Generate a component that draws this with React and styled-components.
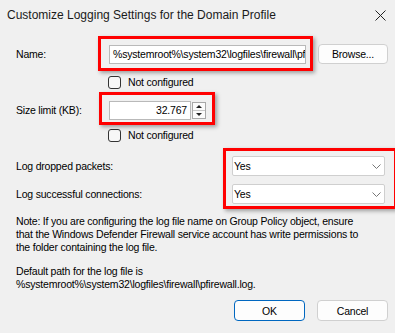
import React from "react";
import styled, { createGlobalStyle } from "styled-components";

const GlobalStyle = createGlobalStyle`
  html, body {
    margin: 0;
    padding: 0;
    background: #f0f0f0;
  }
  body {
    font-family: "Liberation Sans", Arial, sans-serif;
    font-size: 10.5px;
    letter-spacing: -0.2px;
    color: #000;
  }
`;

const Window = styled.div`
  position: relative;
  width: 395px;
  height: 333px;
  overflow: hidden;
  background: #f0f0f0;
`;

const TitleBar = styled.div`
  height: 30px;
  display: flex;
  align-items: center;
  justify-content: space-between;
  padding: 0 7px 0 7px;
  font-size: 12px;
  letter-spacing: 0;
  color: #1a1a1a;
`;

const CloseButton = styled.div`
  width: 14px;
  height: 14px;
  display: flex;
  align-items: center;
  justify-content: center;
  margin-right: 1px;
`;

const Body = styled.div`
  padding: 0 7px 0 16px;
`;

const Row = styled.div`
  display: flex;
  align-items: center;
  margin-top: ${p => p.top || 0}px;
  padding-left: ${p => p.indent || 0}px;
`;

const Label = styled.label`
  width: ${p => p.width || 93}px;
  flex: none;
  line-height: 13px;
`;

const HighlightWrap = styled.div`
  position: relative;
  display: flex;
  flex-direction: ${p => (p.column ? "column" : "row")};
  gap: 8px;
`;

const Highlight = styled.div`
  position: absolute;
  top: ${p => p.t}px;
  left: ${p => p.l}px;
  right: ${p => p.r}px;
  bottom: ${p => p.b}px;
  border: 3px solid #ff0000;
  box-shadow: 2px 2px 4px rgba(0, 0, 0, 0.35);
  pointer-events: none;
`;

const TextInput = styled.div`
  box-sizing: border-box;
  width: ${p => p.width}px;
  height: 19px;
  background: #fff;
  border: 1px solid #b9b9b9;
  padding: 0 3px;
  line-height: 17px;
  white-space: nowrap;
  overflow: hidden;
  text-align: ${p => (p.right ? "right" : "left")};
`;

const Button = styled.button`
  box-sizing: border-box;
  width: ${p => p.width || 71}px;
  height: ${p => p.height || 21}px;
  margin-left: ${p => p.gap || 0}px;
  background: #fdfdfd;
  border: 1px solid ${p => (p.primary ? "#0067c0" : "#d0d0d0")};
  border-radius: 4px;
  font-family: inherit;
  font-size: 10.5px;
  letter-spacing: -0.2px;
  color: #000;
  padding: 0;
`;

const CheckRow = styled.label`
  display: flex;
  align-items: center;
  gap: 7px;
  line-height: 13px;
`;

const Box = styled.span`
  box-sizing: border-box;
  width: 13px;
  height: 13px;
  border: 1px solid #333;
  border-radius: 3px;
  background: #f7f7f7;
`;

const SpinField = styled.div`
  display: flex;
  align-items: center;
`;

const Spinner = styled.div`
  box-sizing: border-box;
  width: 14px;
  height: 17px;
  margin-left: 1px;
  border: 1px solid #a8a8a8;
  display: flex;
  flex-direction: column;
  background: #fbfbfb;
`;

const SpinHalf = styled.div`
  flex: 1;
  display: flex;
  align-items: center;
  justify-content: center;
  border-top: ${p => (p.down ? "1px solid #c8c8c8" : "none")};
`;

const Arrow = styled.span`
  width: 0;
  height: 0;
  border-left: 3px solid transparent;
  border-right: 3px solid transparent;
  ${p =>
    p.down
      ? "border-top: 3px solid #222;"
      : "border-bottom: 3px solid #222;"}
`;

const Labels = styled.div`
  display: flex;
  flex-direction: column;
  gap: 8px;
`;

const LabelCell = styled.div`
  width: 216px;
  height: 20px;
  display: flex;
  align-items: center;
`;

const Select = styled.div`
  box-sizing: border-box;
  width: 153px;
  height: 20px;
  background: #fff;
  border: 1px solid #cfcfcf;
  border-radius: 2px;
  display: flex;
  align-items: center;
  justify-content: space-between;
  padding: 0 3px 0 1px;
`;

const Note = styled.p`
  margin: ${p => p.top || 0}px 0 0 0;
  line-height: 13px;
  white-space: nowrap;
`;

const Footer = styled.div`
  display: flex;
  justify-content: flex-end;
  margin-top: 9px;
`;

const Chevron = () => (
  <svg width="9" height="5" viewBox="0 0 9 5">
    <path d="M0.5 0.5 L4.5 4.5 L8.5 0.5" fill="none" stroke="#777" strokeWidth="1" />
  </svg>
);

const Checkbox = ({ children }) => (
  <CheckRow>
    <Box />
    {children}
  </CheckRow>
);

export default function App() {
  return (
    <Window>
      <GlobalStyle />
      <TitleBar>
        <span>Customize Logging Settings for the Domain Profile</span>
        <CloseButton>
          <svg width="11" height="11" viewBox="0 0 11 11">
            <path d="M0.5 0.5 L10.5 10.5 M10.5 0.5 L0.5 10.5" stroke="#222" strokeWidth="1" />
          </svg>
        </CloseButton>
      </TitleBar>
      <Body>
        <Row top={14}>
          <Label>Name:</Label>
          <HighlightWrap>
            <TextInput width={197}>%systemroot%\system32\logfiles\firewall\pfirewall.log</TextInput>
            <Highlight t={-9} l={-11} r={-7} b={-7} />
          </HighlightWrap>
          <Button width={72} height={20} gap={12}>Browse...</Button>
        </Row>
        <Row top={12} indent={92}>
          <Checkbox>Not configured</Checkbox>
        </Row>
        <Row top={12}>
          <Label>Size limit (KB):</Label>
          <HighlightWrap>
            <SpinField>
              <TextInput width={82} right>32.767</TextInput>
              <Spinner>
                <SpinHalf><Arrow /></SpinHalf>
                <SpinHalf down><Arrow down /></SpinHalf>
              </Spinner>
            </SpinField>
            <Highlight t={-9} l={-10} r={-9} b={-5} />
          </HighlightWrap>
        </Row>
        <Row top={9} indent={92}>
          <Checkbox>Not configured</Checkbox>
        </Row>
        <Row top={14}>
          <Labels>
            <LabelCell>Log dropped packets:</LabelCell>
            <LabelCell>Log successful connections:</LabelCell>
          </Labels>
          <HighlightWrap column>
            <Select>Yes<Chevron /></Select>
            <Select>Yes<Chevron /></Select>
            <Highlight t={-8} l={-9} r={-12} b={-5} />
          </HighlightWrap>
        </Row>
        <Note top={11}>
          Note: If you are configuring the log file name on Group Policy object, ensure
          <br />
          that the Windows Defender Firewall service account has write permissions to
          <br />
          the folder containing the log file.
        </Note>
        <Note top={11}>
          Default path for the log file is
          <br />
          %systemroot%\system32\logfiles\firewall\pfirewall.log.
        </Note>
        <Footer>
          <Button primary>OK</Button>
          <Button gap={12}>Cancel</Button>
        </Footer>
      </Body>
    </Window>
  );
}
